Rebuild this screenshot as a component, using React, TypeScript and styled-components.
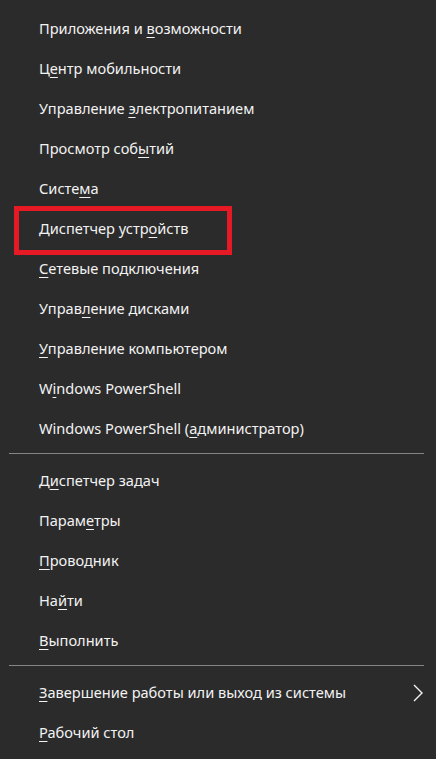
import React from 'react'
import styled, { createGlobalStyle } from 'styled-components'

const GlobalStyle = createGlobalStyle`
  html, body {
    margin: 0;
    padding: 0;
    background: #2b2b2b;
  }
  body {
    font-family: "Noto Sans", "Open Sans", Arial, sans-serif;
  }
`;

const Menu = styled.nav`
  width: 436px;
  min-height: 759px;
  box-sizing: border-box;
  padding: 8px 12px 0 9px;
  background: #2b2b2b;
  color: #f2f2f2;
`;

const Group = styled.ul`
  list-style: none;
  margin: 0;
  padding: 0;
`;

const Row = styled.li`
  position: relative;
  display: flex;
  align-items: center;
  justify-content: space-between;
  height: 40px;
  padding-left: 30px;
  font-size: 14.6px;
  line-height: 20px;
  white-space: nowrap;
  cursor: default;

  u {
    text-decoration-thickness: 1px;
    text-underline-offset: 3px;
  }
`;

const Label = styled.span``;

const Separator = styled.hr`
  margin: 5px 0 6px;
  border: 0;
  height: 1px;
  background: #858585;
`;

// red annotation frame drawn over the "Диспетчер устройств" row
const Highlight = styled.span`
  position: absolute;
  left: 5px;
  top: -2px;
  width: 218px;
  height: 49px;
  box-sizing: border-box;
  border: 5px solid #e51a24;
  pointer-events: none;
`;

const Chevron = styled.svg`
  width: 10px;
  height: 18px;
  margin-right: 1px;
  margin-top: 2px;
`;

type Item = { before: string; key: string; after: string; boxed?: boolean; submenu?: boolean }

const groups: Item[][] = [
  [
    { before: 'Приложения и ', key: 'в', after: 'озможности' },
    { before: 'Ц', key: 'е', after: 'нтр мобильности' },
    { before: 'Управление ', key: 'э', after: 'лектропитанием' },
    { before: 'Просмотр соб', key: 'ы', after: 'тий' },
    { before: 'Систе', key: 'м', after: 'а' },
    { before: 'Диспетчер устр', key: 'о', after: 'йств', boxed: true },
    { before: '', key: 'С', after: 'етевые подключения' },
    { before: 'Управ', key: 'л', after: 'ение дисками' },
    { before: '', key: 'У', after: 'правление компьютером' },
    { before: 'W', key: 'i', after: 'ndows PowerShell' },
    { before: 'Windows PowerShell (', key: 'а', after: 'дминистратор)' },
  ],
  [
    { before: 'Д', key: 'и', after: 'спетчер задач' },
    { before: 'Парам', key: 'е', after: 'тры' },
    { before: '', key: 'П', after: 'роводник' },
    { before: 'На', key: 'й', after: 'ти' },
    { before: '', key: 'В', after: 'ыполнить' },
  ],
  [
    { before: '', key: 'З', after: 'авершение работы или выход из системы', submenu: true },
    { before: '', key: 'Р', after: 'абочий стол' },
  ],
]

const App: React.FC = () => {
  return (
    <>
      <GlobalStyle />
      <Menu>
        {groups.map((items, gi) => (
          <React.Fragment key={gi}>
            {gi > 0 && <Separator />}
            <Group>
              {items.map((it, i) => (
                <Row key={i}>
                  <Label>
                    {it.before}<u>{it.key}</u>{it.after}
                  </Label>
                  {it.submenu && (
                    <Chevron viewBox="0 0 10 18" fill="none">
                      <path d="M1 1 L9 9 L1 17" stroke="#f2f2f2" strokeWidth="1.4" />
                    </Chevron>
                  )}
                  {it.boxed && <Highlight />}
                </Row>
              ))}
            </Group>
          </React.Fragment>
        ))}
      </Menu>
    </>
  )
}

export default App
